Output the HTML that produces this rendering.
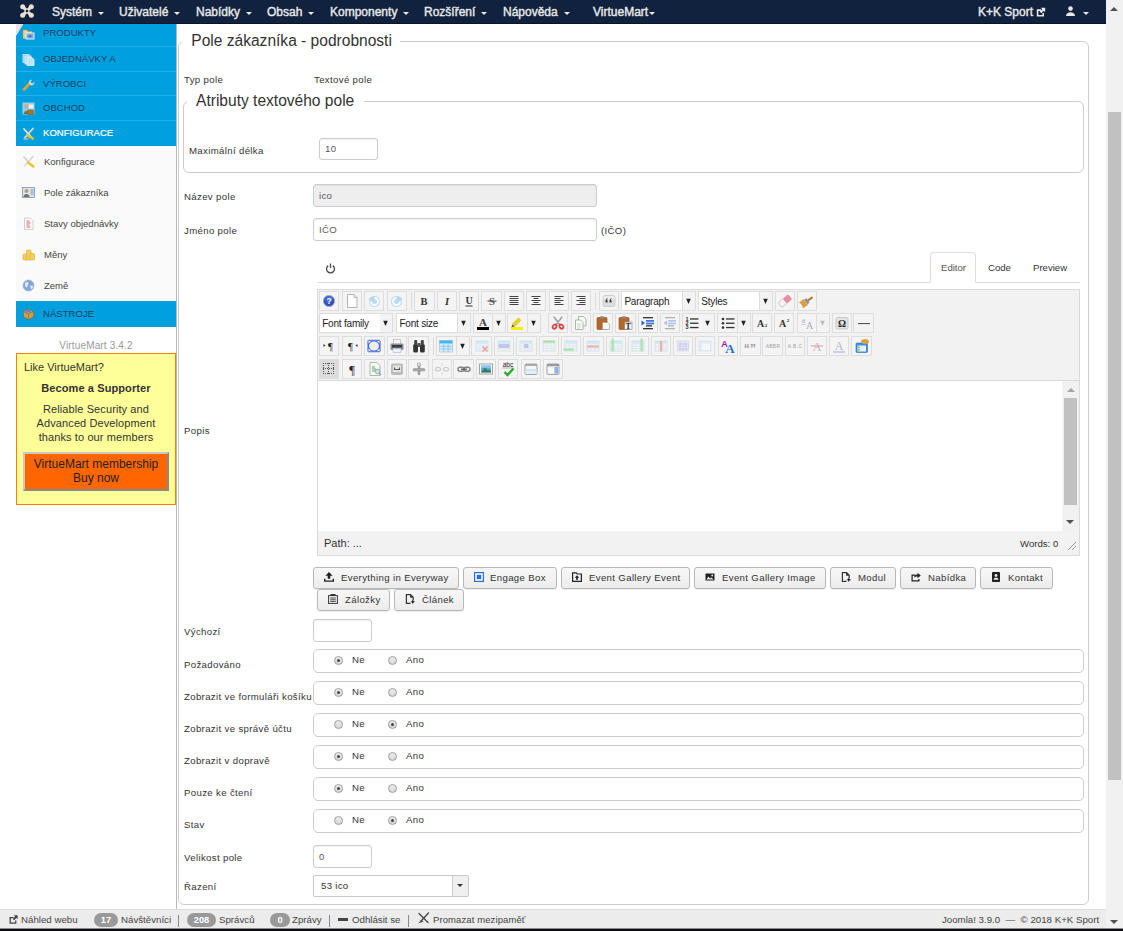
<!DOCTYPE html>
<html lang="cs">
<head>
<meta charset="utf-8">
<title>Pole zákazníka - podrobnosti</title>
<style>
*{box-sizing:border-box;margin:0;padding:0}
html,body{width:1123px;height:931px;overflow:hidden;background:#fff}
body{position:relative;font-family:"Liberation Sans",sans-serif;font-size:10px;color:#333}
.a{position:absolute;white-space:nowrap}
/* navbar */
#nav{left:0;top:0;width:1106px;height:24px;background:#10223e;border-bottom:1px solid #0a1428}
#nav span.m{position:absolute;top:5px;color:#e8e8e8;font-size:12px;line-height:15px;font-weight:normal;-webkit-text-stroke:.4px #e8e8e8}
.caret{display:inline-block;width:0;height:0;border-left:3.5px solid transparent;border-right:3.5px solid transparent;border-top:3.5px solid #e8e8e8;vertical-align:middle;margin-left:6px;margin-top:1px}
/* sidebar */
.sb{left:16px;width:160px;height:25px;background:#00a0df;border-bottom:1px solid #22b0ea;color:#1d3f5f;font-size:9.5px;line-height:24px;padding-left:27px;letter-spacing:.05px}
.sb.on{color:#fff;-webkit-text-stroke:.2px #fff}
.si{left:16px;width:160px;height:31px;background:#fafafa;color:#444;font-size:9.5px;line-height:31px;padding-left:28px}
.ic{position:absolute;left:6px;top:6px;width:13px;height:13px}
.si .ic{top:9px}
/* form */
.lb{font-size:9.6px;letter-spacing:.36px;color:#333;line-height:12px}
.inp{border:1px solid #ccc;border-radius:3px;background:#fff;font-size:9.6px;letter-spacing:.3px;color:#5a5a5a;line-height:20px;padding-left:5px;box-shadow:inset 0 1px 1px rgba(0,0,0,.06)}
.rb{left:313px;width:771px;height:24px;border:1px solid #ccc;border-radius:5px;background:#fff}
.rd{position:absolute;top:6px;width:9px;height:9px;border:1px solid #9c9c9c;border-radius:50%;background:linear-gradient(#eee,#d6d6d6)}
.rd.c::after{content:"";position:absolute;left:2px;top:2px;width:3px;height:3px;border-radius:50%;background:#444}
.rt{position:absolute;top:4px;font-size:9.6px;line-height:12px;letter-spacing:.36px;color:#333}
.btn{height:22px;border:1px solid #b8b8b8;border-radius:3px;background:linear-gradient(#f7f7f7,#ececec);font-size:9.6px;letter-spacing:.36px;color:#333;line-height:20px;box-shadow:0 1px 1px rgba(0,0,0,.08)}
.btn i{position:absolute;left:10px;top:4px;width:10px;height:10px;line-height:0}
.btn b{position:absolute;font-weight:normal;top:0}
/* editor toolbar */
.tb{width:20px;height:20px;border:1px solid #ddd;background:#f3f3f3}
.tb svg{position:absolute;left:1px;top:1px;width:16px;height:16px}
.sel{height:20px;background:#fff;border:1px solid #ddd;font-size:10px;line-height:18px;padding-top:1px;color:#222;padding-left:2px;letter-spacing:-.2px}
.ar{width:12px;height:20px;font-size:7px;line-height:18px;text-align:center;color:#222}
.sep{width:1px;height:18px;background:#dcdcdc}
.st{top:914px;font-size:9.7px;line-height:12px;color:#444}
.bdg{top:913px;height:14px;border-radius:7px;background:#999;color:#fff;font-size:9.3px;font-weight:bold;line-height:14px;text-align:center}
.lg{padding:0 8px 0 8px;background:#fff;font-size:16px;line-height:22px;color:#333;transform:scaleX(.972);transform-origin:0 0}
</style>
</head>
<body>

<!-- SIDEBAR -->
<div class="a sb" style="top:21px;height:26px"><svg class="ic" viewBox="0 0 13 13"><path d="M1 3h4l1 1.500h4v7h-9z" fill="#e8d28a" stroke="#b9a25a" stroke-width=".6"/><rect x="4" y="6" width="8" height="6" fill="#7ab0e8" stroke="#e8e8f0" stroke-width="1"/><rect x="6.500" y="8" width="3" height="2.500" fill="#4a7fc8"/></svg>PRODUKTY</div>
<div class="a sb" style="top:47px"><svg class="ic" viewBox="0 0 13 13"><rect x="1" y="1.500" width="6" height="8" fill="#8fd0ef" stroke="#d6eefa" stroke-width=".8"/><rect x="3" y="3" width="6" height="8" fill="#a5d9f2" stroke="#dff1fa" stroke-width=".8"/><path d="M5 4.500h5l2 2v6h-7z" fill="#bfe3f5" stroke="#e8f5fc" stroke-width=".8"/></svg>OBJEDNÁVKY A</div>
<div class="a sb" style="top:72px;height:24px"><svg class="ic" viewBox="0 0 13 13"><path d="M2 11.500l5.500-6" stroke="#e0a52c" stroke-width="2.600" stroke-linecap="round"/><path d="M7 5.500c-.8-2 .8-4.200 3.300-3.800l-1.800 1.900.6 1.500 1.700.3 1.500-1.700c.6 2.200-1.500 4-3.800 3.300z" fill="#d8dde2"/></svg>VÝROBCI</div>
<div class="a sb" style="top:96px"><svg class="ic" viewBox="0 0 13 13"><rect x="1" y="1" width="11" height="11" fill="#8ec6ea" stroke="#c8d8e0" stroke-width=".8"/><rect x="6.500" y="2.500" width="5" height="4" fill="#e8f2f8"/><circle cx="4.500" cy="4.500" r="2" fill="#d8a878"/><path d="M1.500 12c0-4 6-4 6 0z" fill="#5a7a5a"/><rect x="5.500" y="8" width="6" height="4.500" rx=".6" fill="#a8742a" stroke="#7a5218" stroke-width=".5"/></svg>OBCHOD</div>
<div class="a sb on" style="top:121px;border-bottom:0"><svg class="ic" viewBox="0 0 13 13"><path d="M2 2l8.500 9.500" stroke="#e8e8e8" stroke-width="1.800" stroke-linecap="round"/><path d="M11 1.500l-8 9" stroke="#dcdcdc" stroke-width="1.800" stroke-linecap="round"/><path d="M5.500 8.500l5.500 3" stroke="#f0c020" stroke-width="2.200" stroke-linecap="round"/><path d="M1.500 12h5" stroke="#bbb" stroke-width="1.400"/></svg>KONFIGURACE</div>
<div class="a si" style="top:146px"><svg class="ic" viewBox="0 0 13 13"><path d="M2 2l8.500 9.500" stroke="#d4d4d4" stroke-width="1.800" stroke-linecap="round"/><path d="M11 1.500l-8 9" stroke="#dadada" stroke-width="1.800" stroke-linecap="round"/><path d="M6 7.500l5.500 4" stroke="#f0c428" stroke-width="2.200" stroke-linecap="round"/></svg>Konfigurace</div>
<div class="a si" style="top:177px"><svg class="ic" viewBox="0 0 13 13"><rect x=".5" y="1.500" width="12" height="10" fill="#dbe6f2" stroke="#7a94b8" stroke-width=".8"/><circle cx="4.500" cy="5" r="2" fill="#c89868"/><path d="M1.500 11c0-4 6-4 6 0z" fill="#8a6a4a"/><path d="M8.500 4h3M8.500 6h3M8.500 8h3" stroke="#6a8ac8" stroke-width=".9"/></svg>Pole zákazníka</div>
<div class="a si" style="top:208px"><svg class="ic" viewBox="0 0 13 13"><path d="M2.500 1h6l2.500 2.500v9h-8.500z" fill="#fcfcfc" stroke="#c4c4c4" stroke-width=".8"/><path d="M4.500 4h3M4.500 6h4M4.500 8h3M4.500 10h4" stroke="#e05050" stroke-width=".9"/></svg>Stavy objednávky</div>
<div class="a si" style="top:239px"><svg class="ic" viewBox="0 0 13 13"><g fill="#f2cf62" stroke="#dba928" stroke-width=".6"><rect x="1" y="6" width="4.500" height="6" rx="1"/><rect x="4.500" y="2" width="4.500" height="10" rx="1"/><rect x="8" y="5.500" width="4.500" height="6.500" rx="1"/></g></svg>Měny</div>
<div class="a si" style="top:270px"><svg class="ic" viewBox="0 0 13 13"><circle cx="6.500" cy="6.500" r="5.500" fill="#7fa6d8" stroke="#a8b8c8" stroke-width=".8"/><path d="M3 4c1.500-1.500 3-1 3.500 0s-1 2-1 3.500-2 1-2.500-.5zM8 7c1-1 3-.5 3 .5s-1 3-2 2.500z" fill="#dfe8f0"/></svg>Země</div>
<div class="a sb" style="top:301px;border-bottom:0;height:26px;line-height:26px"><svg class="ic" viewBox="0 0 13 13"><path d="M1.500 4.500l5-2.500 5 2.500v5.500l-5 2.500-5-2.500z" fill="#c8a050" stroke="#8a6a2a" stroke-width=".6"/><path d="M1.500 4.500l5 2.500 5-2.500M6.500 7v5.500" stroke="#8a6a2a" stroke-width=".6" fill="none"/><rect x="4" y="3" width="5" height="2.500" fill="#5a8ad0"/></svg>NÁSTROJE</div>
<div class="a" style="left:16px;top:340px;width:160px;text-align:center;font-size:10px;line-height:12px;color:#999;letter-spacing:.15px">VirtueMart 3.4.2</div>

<div class="a" style="left:16px;top:23px;width:0;height:0;border-top:13px solid #e4e4e4;border-right:8px solid transparent"></div>
<!-- NAVBAR -->
<div class="a" id="nav">
<span class="m" style="left:52px">Systém<i class="caret"></i></span>
<span class="m" style="left:119px">Uživatelé<i class="caret"></i></span>
<span class="m" style="left:196px">Nabídky<i class="caret"></i></span>
<span class="m" style="left:267px">Obsah<i class="caret"></i></span>
<span class="m" style="left:330px">Komponenty<i class="caret"></i></span>
<span class="m" style="left:424px">Rozšíření<i class="caret"></i></span>
<span class="m" style="left:503px">Nápověda<i class="caret"></i></span>
<span class="m" style="left:593px">VirtueMart<i class="caret" style="margin-left:1px"></i></span>
<span class="m" style="left:978px">K+K Sport</span>
<svg class="a" style="left:20px;top:4px" width="14" height="14" viewBox="0 0 14 14"><g fill="none" stroke="#e9e1d4" stroke-width="3.200" stroke-linecap="round"><path d="M3.200 3.200l7.600 7.600M10.800 3.200l-7.600 7.600"/></g><g fill="#e9e1d4"><circle cx="2.700" cy="2.700" r="2.500"/><circle cx="11.300" cy="2.700" r="2.500"/><circle cx="2.700" cy="11.300" r="2.500"/><circle cx="11.300" cy="11.300" r="2.500"/></g><g fill="#10223e"><circle cx="7" cy="7" r="1.300"/><circle cx="7" cy="1" r="1.300"/><circle cx="7" cy="13" r="1.300"/><circle cx="1" cy="7" r="1.300"/><circle cx="13" cy="7" r="1.300"/></g></svg>
<span class="m" style="left:1066px"><svg width="9" height="10" viewBox="0 0 9 10" style="vertical-align:0"><circle cx="4.500" cy="2.600" r="2.300" fill="#e8e8e8"/><path d="M0 10c0-5 9-5 9 0z" fill="#e8e8e8"/></svg><i class="caret" style="margin-left:8px"></i></span>
<svg class="a" style="left:1036px;top:7px" width="10" height="10" viewBox="0 0 10 10"><path d="M.8 2.300h4.200v1.600h-2.600v4h4v-1.800h1.600v3.400h-7.200z" fill="#e8e8e8"/><path d="M4.800 .8h4.400v4.400l-1.400-1.400-2.500 2.500-1.600-1.600 2.500-2.500z" fill="#e8e8e8"/></svg>
</div>

<div class="a" style="left:176px;top:24px;width:1px;height:885px;background:#b8b8b8"></div>
<!-- MAIN -->
<div class="a" style="left:178px;top:41px;width:911px;height:864px;border:1px solid #ccc;border-radius:6px"></div>
<div class="a lg" style="left:182px;top:30px;padding-left:9.6px">Pole zákazníka - podrobnosti</div>

<div class="a lb" style="left:184px;top:74px">Typ pole</div>
<div class="a lb" style="left:314px;top:74px">Textové pole</div>

<div class="a" style="left:183px;top:101px;width:901px;height:72px;border:1px solid #ccc;border-radius:6px"></div>
<div class="a lg" style="left:187px;top:90px;padding-left:9.3px;padding-right:10px">Atributy textového pole</div>
<div class="a lb" style="left:189px;top:145px">Maximální délka</div>
<div class="a inp" style="left:319px;top:138px;width:59px;height:22px">10</div>

<div class="a lb" style="left:184px;top:191px">Název pole</div>
<div class="a inp" style="left:313px;top:184px;width:284px;height:23px;background:#eee;line-height:21px">ico</div>
<div class="a lb" style="left:184px;top:225px">Jméno pole</div>
<div class="a inp" style="left:313px;top:218px;width:284px;height:23px;line-height:21px">IČO</div>
<div class="a lb" style="left:601px;top:225px">(IČO)</div>

<div class="a lb" style="left:184px;top:425px">Popis</div>

<!-- YELLOW BOX -->
<div class="a" style="left:16px;top:353px;width:160px;height:152px;background:#ffff99;border:1px solid #ff7f00"></div>
<div class="a" style="left:24px;top:360px;font-size:11px;line-height:14px;color:#333">Like VirtueMart?</div>
<div class="a" style="left:16px;top:381px;width:160px;text-align:center;font-size:11px;letter-spacing:.1px;line-height:14px;color:#333;font-weight:bold">Become a Supporter</div>
<div class="a" style="left:16px;top:402px;width:160px;text-align:center;font-size:11px;letter-spacing:.1px;line-height:14px;color:#333;white-space:normal">Reliable Security and<br>Advanced Development<br>thanks to our members</div>
<div class="a" style="left:23px;top:452px;width:146px;height:39px;background:#ff6600;border:2px solid;border-color:#d0c8c0 #8a8a8a #8a8a8a #d0c8c0;text-align:center;font-size:12px;line-height:14px;color:#222;padding-top:3px">VirtueMart membership<br>Buy now</div>

<!-- EDITOR TABS -->
<div class="a" style="left:317px;top:282px;width:763px;height:1px;background:#ddd"></div>
<div class="a" style="left:930px;top:252px;width:46px;height:31px;border:1px solid #ddd;border-bottom:1px solid #fff;border-radius:4px 4px 0 0;background:#fff"></div>
<div class="a lb" style="left:941px;top:262px;letter-spacing:0;color:#555">Editor</div>
<div class="a lb" style="left:988px;top:262px;letter-spacing:0;color:#333">Code</div>
<div class="a lb" style="left:1033px;top:262px;letter-spacing:0;color:#333">Preview</div>
<svg class="a" style="left:325px;top:263px" width="11" height="11" viewBox="0 0 11 11"><path d="M3.2 2.6A4 4 0 1 0 7.8 2.6" fill="none" stroke="#484848" stroke-width="1.3"/><path d="M5.5 0.5V5" stroke="#484848" stroke-width="1.3"/></svg>

<!-- EDITOR FRAME -->
<div class="a" style="left:317px;top:289px;width:763px;height:267px;border:1px solid #dadada;background:#f2f2f2"></div>
<div class="a" style="left:318px;top:380px;width:761px;height:151px;background:#fff;border-top:1px solid #d9d9d9"></div>
<!-- inner scrollbar -->
<div class="a" style="left:1062px;top:381px;width:17px;height:150px;background:#f1f1f1"></div>
<div class="a" style="left:1064px;top:398px;width:13px;height:107px;background:#c1c1c1"></div>
<div class="a" style="left:1067px;top:388px;width:0;height:0;border-left:4px solid transparent;border-right:4px solid transparent;border-bottom:4px solid #a3a3a3"></div>
<div class="a" style="left:1066px;top:520px;width:0;height:0;border-left:4px solid transparent;border-right:4px solid transparent;border-top:4px solid #505050"></div>
<div class="a" style="left:324px;top:537px;font-size:11px;line-height:13px;color:#333">Path: ...</div>
<div class="a" style="left:1020px;top:538px;font-size:9.6px;line-height:12px;color:#333">Words: 0</div>
<svg class="a" style="left:1067px;top:541px" width="10" height="10" viewBox="0 0 10 10"><path d="M9 1L1 9M9 5L5 9" stroke="#999" stroke-width="1" fill="none"/></svg>

<!-- TOOLBAR -->
<div id="tbar">
<div class="a tb" style="left:319.2px;top:291.4px;width:20.3px;background:#f4f4f4"><svg viewBox="0 0 16 16" style="left:1.2px"><circle cx="8" cy="8" r="5.600" fill="#2a4fc4" stroke="#aab" stroke-width="1"/><circle cx="8" cy="6.500" r="3.500" fill="#5b7fe6" opacity=".55"/><text x="8" y="11" font-family="Liberation Sans,serif" font-size="8.5" font-weight="bold" font-style="normal" fill="#fff" text-anchor="middle" >?</text></svg></div>
<div class="a tb" style="left:341.5px;top:291.4px;width:20.3px;background:#f4f4f4"><svg viewBox="0 0 16 16" style="left:1.2px"><path d="M3.5 1.5h6.5l3 3v10h-9.5z" fill="#fdfdfd" stroke="#aaa" stroke-width=".9"/><path d="M10 1.5v3h3" fill="#e8e8e8" stroke="#aaa" stroke-width=".8"/></svg></div>
<div class="a tb" style="left:364.2px;top:291.4px;width:20.3px;background:#f4f4f4"><svg viewBox="0 0 16 16" style="left:1.2px"><g opacity=".9"><circle cx="8.5" cy="8.5" r="5.5" fill="#b4daf3"/><path d="M5 8.5a3.5 3.5 0 1 0 3.5-3.5" fill="none" stroke="#fff" stroke-width="2"/><path d="M2.5 5.5l5-2.5v5z" fill="#a9d1ee"/></g></svg></div>
<div class="a tb" style="left:386.5px;top:291.4px;width:20.3px;background:#f4f4f4"><svg viewBox="0 0 16 16" style="left:1.2px"><g opacity=".9"><circle cx="7.5" cy="8.5" r="5.5" fill="#b4daf3"/><path d="M11 8.5a3.5 3.5 0 1 1-3.5-3.5" fill="none" stroke="#fff" stroke-width="2"/><path d="M13.5 5.5l-5-2.5v5z" fill="#a9d1ee"/></g></svg></div>
<div class="a sep" style="left:410.5px;top:292.4px"></div>
<div class="a tb" style="left:414.3px;top:291.4px;width:20.3px;background:#f4f4f4"><svg viewBox="0 0 16 16" style="left:1.2px"><text x="8" y="11.7" font-family="Liberation Serif,serif" font-size="10.5" font-weight="bold" font-style="normal" fill="#333" text-anchor="middle" >B</text></svg></div>
<div class="a tb" style="left:436.7px;top:291.4px;width:20.3px;background:#f4f4f4"><svg viewBox="0 0 16 16" style="left:1.2px"><text x="8" y="11.7" font-family="Liberation Serif,serif" font-size="10.5" font-weight="bold" font-style="italic" fill="#333" text-anchor="middle" >I</text></svg></div>
<div class="a tb" style="left:459.1px;top:291.4px;width:20.3px;background:#f4f4f4"><svg viewBox="0 0 16 16" style="left:1.2px"><text x="8" y="11" font-family="Liberation Serif,serif" font-size="10" font-weight="bold" font-style="normal" fill="#333" text-anchor="middle" >U</text><rect x="4.5" y="12.5" width="7" height="1" fill="#333"/></svg></div>
<div class="a tb" style="left:481.4px;top:291.4px;width:20.3px;background:#f4f4f4"><svg viewBox="0 0 16 16" style="left:1.2px"><text x="8" y="11.7" font-family="Liberation Serif,serif" font-size="10.5" font-weight="bold" font-style="normal" fill="#555" text-anchor="middle" >S</text><rect x="3.5" y="7.6" width="9" height="1" fill="#444"/></svg></div>
<div class="a tb" style="left:503.7px;top:291.4px;width:20.3px;background:#f4f4f4"><svg viewBox="0 0 16 16" style="left:1.2px"><rect x="3.5" y="3.0" width="9.0" height="1" fill="#444"/><rect x="3.5" y="5.0" width="9.0" height="1" fill="#444"/><rect x="3.5" y="7.0" width="9.0" height="1" fill="#444"/><rect x="3.5" y="9.0" width="9.0" height="1" fill="#444"/><rect x="3.5" y="11.0" width="9.0" height="1" fill="#444"/></svg></div>
<div class="a tb" style="left:526.2px;top:291.4px;width:20.3px;background:#f4f4f4"><svg viewBox="0 0 16 16" style="left:1.2px"><rect x="3.5" y="3.0" width="9.0" height="1" fill="#444"/><rect x="5.5" y="5.0" width="5.0" height="1" fill="#444"/><rect x="3.5" y="7.0" width="9.0" height="1" fill="#444"/><rect x="5.5" y="9.0" width="5.0" height="1" fill="#444"/><rect x="3.5" y="11.0" width="9.0" height="1" fill="#444"/></svg></div>
<div class="a tb" style="left:548.6px;top:291.4px;width:20.3px;background:#f4f4f4"><svg viewBox="0 0 16 16" style="left:1.2px"><rect x="3.5" y="3.0" width="9.0" height="1" fill="#444"/><rect x="3.5" y="5.0" width="6.0" height="1" fill="#444"/><rect x="3.5" y="7.0" width="9.0" height="1" fill="#444"/><rect x="3.5" y="9.0" width="6.0" height="1" fill="#444"/><rect x="3.5" y="11.0" width="9.0" height="1" fill="#444"/></svg></div>
<div class="a tb" style="left:570.7px;top:291.4px;width:20.3px;background:#f4f4f4"><svg viewBox="0 0 16 16" style="left:1.2px"><rect x="3.5" y="3.0" width="9.0" height="1" fill="#444"/><rect x="6.5" y="5.0" width="6.0" height="1" fill="#444"/><rect x="3.5" y="7.0" width="9.0" height="1" fill="#444"/><rect x="6.5" y="9.0" width="6.0" height="1" fill="#444"/><rect x="3.5" y="11.0" width="9.0" height="1" fill="#444"/></svg></div>
<div class="a sep" style="left:594.5px;top:292.4px"></div>
<div class="a tb" style="left:598.5px;top:291.4px;width:20.3px;background:#f4f4f4"><svg viewBox="0 0 16 16" style="left:1.2px"><rect x="2" y="2.500" width="12" height="11" rx="2" fill="#dedede" stroke="#c6c6c6" stroke-width=".8"/><rect x="2.500" y="3" width="11" height="4" rx="1.500" fill="#ececec"/><path d="M4.600 9.500v-2.200c0-1.200.8-2 2-2.100v.9c-.6.100-.9.500-.9 1.100h.9v2.300zM8.600 9.500v-2.200c0-1.200.8-2 2-2.100v.9c-.6.100-.9.500-.9 1.100h.9v2.300z" fill="#3a3a3a"/></svg></div>
<div class="a sel" style="left:621.4px;top:291.4px;width:61.5px">Paragraph</div>
<div class="a tb" style="left:682.6px;top:291.4px;width:13px;border-left:0"><svg viewBox="0 0 8 8" style="left:2.0px;top:5.5px;width:7px;height:7px"><path d="M1.400 .8h5.200l-2.600 6z" fill="#222"/></svg></div>
<div class="a sel" style="left:698.3px;top:291.4px;width:61.5px">Styles</div>
<div class="a tb" style="left:759.6px;top:291.4px;width:13px;border-left:0"><svg viewBox="0 0 8 8" style="left:2.0px;top:5.5px;width:7px;height:7px"><path d="M1.400 .8h5.200l-2.600 6z" fill="#222"/></svg></div>
<div class="a tb" style="left:774.6px;top:291.4px;width:20.3px;background:#f4f4f4"><svg viewBox="0 0 16 16" style="left:1.2px"><g transform="rotate(-40 8 8)"><rect x="1.5" y="5" width="7" height="6" rx="1.2" fill="#f4f4f4" stroke="#bbb" stroke-width=".7"/><rect x="8" y="5" width="6.5" height="6" rx="1.2" fill="#f08aa4" stroke="#d88" stroke-width=".5"/></g></svg></div>
<div class="a tb" style="left:797.2px;top:291.4px;width:20.3px;background:#f4f4f4"><svg viewBox="0 0 16 16" style="left:1.2px"><g transform="rotate(-35 8 8)"><rect x="8.5" y="7" width="6.5" height="2.2" rx="1" fill="#c07a2a"/><rect x="6.5" y="5.3" width="2.6" height="5.6" fill="#8a8f9a"/><path d="M0.5 4.5h6v7.2h-6c1-1.5 1-5.5 0-7.2z" fill="#d9a143"/></g></svg></div>
<div class="a sel" style="left:319.2px;top:313.4px;width:61.5px">Font family</div>
<div class="a tb" style="left:380.4px;top:313.4px;width:13px;border-left:0"><svg viewBox="0 0 8 8" style="left:2.0px;top:5.5px;width:7px;height:7px"><path d="M1.400 .8h5.200l-2.600 6z" fill="#222"/></svg></div>
<div class="a sel" style="left:396.4px;top:313.4px;width:61.5px">Font size</div>
<div class="a tb" style="left:457.6px;top:313.4px;width:13px;border-left:0"><svg viewBox="0 0 8 8" style="left:2.0px;top:5.5px;width:7px;height:7px"><path d="M1.400 .8h5.200l-2.600 6z" fill="#222"/></svg></div>
<div class="a tb" style="left:472.8px;top:313.4px;width:20.3px;background:#f4f4f4"><svg viewBox="0 0 16 16" style="left:1.2px"><text x="8" y="10.5" font-family="Liberation Serif,serif" font-size="11" font-weight="bold" font-style="normal" fill="#444" text-anchor="middle" >A</text><rect x="2" y="12" width="12" height="3" fill="#000"/></svg></div>
<div class="a tb" style="left:492.8px;top:313.4px;width:13px;border-left:0"><svg viewBox="0 0 8 8" style="left:2.0px;top:5.5px;width:7px;height:7px"><path d="M1.400 .8h5.200l-2.600 6z" fill="#222"/></svg></div>
<div class="a tb" style="left:507.3px;top:313.4px;width:20.3px;background:#f4f4f4"><svg viewBox="0 0 16 16" style="left:1.2px"><rect x="2" y="12" width="12" height="3" fill="#ffee00"/><g transform="rotate(-45 8 7)"><rect x="3" y="5.2" width="9" height="3.4" rx=".6" fill="#e9d21a" stroke="#b9a400" stroke-width=".4"/><path d="M3 5.4l-3 1.5 3 1.5z" fill="#666"/></g></svg></div>
<div class="a tb" style="left:527.6px;top:313.4px;width:13px;border-left:0"><svg viewBox="0 0 8 8" style="left:2.0px;top:5.5px;width:7px;height:7px"><path d="M1.400 .8h5.200l-2.600 6z" fill="#222"/></svg></div>
<div class="a tb" style="left:548.0px;top:313.4px;width:20.3px;background:#f4f4f4"><svg viewBox="0 0 16 16" style="left:1.2px"><path d="M4.200 2.200l5.800 7.600M11.800 2.200l-5.800 7.600" stroke="#a4a4a4" stroke-width="1.700" stroke-linecap="round"/><ellipse cx="4.600" cy="11.600" rx="1.700" ry="2.300" transform="rotate(38 4.600 11.600)" fill="none" stroke="#e23b40" stroke-width="1.700"/><ellipse cx="11.400" cy="11.600" rx="1.700" ry="2.300" transform="rotate(-38 11.400 11.600)" fill="none" stroke="#e23b40" stroke-width="1.700"/></svg></div>
<div class="a tb" style="left:570.6px;top:313.4px;width:20.3px;background:#f4f4f4"><svg viewBox="0 0 16 16" style="left:1.2px"><path d="M5.5 1.5h5l2.5 2.5v7h-7.5z" fill="#f4f7f4" stroke="#9aa79a" stroke-width=".8"/><path d="M2.5 5h5l2.500 2.500v7h-7.500z" fill="#f8faf8" stroke="#9aa79a" stroke-width=".8"/><path d="M4 9h4M4 11h4M4 13h3" stroke="#b5c4b5" stroke-width=".7"/></svg></div>
<div class="a tb" style="left:592.8px;top:313.4px;width:20.3px;background:#f4f4f4"><svg viewBox="0 0 16 16" style="left:1.2px"><rect x="2" y="2.5" width="10" height="12" rx="1" fill="#b5672a" stroke="#8a4a1a" stroke-width=".6"/><rect x="5" y="1.2" width="4" height="2.6" rx=".8" fill="#888"/><path d="M7.500 7.500h5l2 2v5h-7z" fill="#f6f6f6" stroke="#999" stroke-width=".6"/></svg></div>
<div class="a tb" style="left:615.3px;top:313.4px;width:20.3px;background:#f4f4f4"><svg viewBox="0 0 16 16" style="left:1.2px"><rect x="2" y="2.500" width="10" height="12" rx="1" fill="#b5672a" stroke="#8a4a1a" stroke-width=".6"/><rect x="5" y="1.2" width="4" height="2.600" rx=".8" fill="#888"/><rect x="7.500" y="7" width="7.500" height="7.500" fill="#f6f6f6" stroke="#777" stroke-width=".6"/><text x="11.2" y="13.6" font-family="Liberation Serif,serif" font-size="8" font-weight="bold" font-style="normal" fill="#222" text-anchor="middle" >T</text></svg></div>
<div class="a tb" style="left:637.7px;top:313.4px;width:20.3px;background:#f4f4f4"><svg viewBox="0 0 16 16" style="left:1.2px"><rect x="3" y="2" width="10" height="1.3" fill="#333"/><rect x="3" y="13" width="10" height="1.3" fill="#333"/><rect x="6" y="5" width="8" height="1.8" fill="#3d7be0"/><rect x="6" y="7.600" width="8" height="1.8" fill="#3d7be0"/><rect x="6" y="10.200" width="6" height="1.3" fill="#333"/><path d="M1.500 5.500l3.500 2.500-3.500 2.500z" fill="#2a63d0"/></svg></div>
<div class="a tb" style="left:659.9px;top:313.4px;width:20.3px;background:#f4f4f4"><svg viewBox="0 0 16 16" style="left:1.2px"><g opacity=".35"><rect x="3" y="2" width="10" height="1.3" fill="#333"/><rect x="3" y="13" width="10" height="1.3" fill="#333"/><rect x="6" y="5" width="8" height="1.8" fill="#3d7be0"/><rect x="6" y="7.600" width="8" height="1.8" fill="#3d7be0"/><rect x="6" y="10.200" width="6" height="1.300" fill="#333"/><path d="M5 5.500l-3.500 2.500 3.500 2.500z" fill="#2a63d0"/></g></svg></div>
<div class="a tb" style="left:682.3px;top:313.4px;width:20.3px;background:#f4f4f4"><svg viewBox="0 0 16 16" style="left:1.2px"><rect x="6" y="3.300" width="8.500" height="1.300" fill="#333"/><rect x="6" y="7.600" width="8.500" height="1.300" fill="#333"/><rect x="6" y="11.900" width="8.500" height="1.300" fill="#333"/><text x="3" y="5.8" font-family="Liberation Sans,serif" font-size="5.5" font-weight="bold" font-style="normal" fill="#333" text-anchor="middle" >1</text><text x="3" y="10.1" font-family="Liberation Sans,serif" font-size="5.5" font-weight="bold" font-style="normal" fill="#333" text-anchor="middle" >2</text><text x="3" y="14.4" font-family="Liberation Sans,serif" font-size="5.5" font-weight="bold" font-style="normal" fill="#333" text-anchor="middle" >3</text></svg></div>
<div class="a tb" style="left:702.3px;top:313.4px;width:13px;border-left:0"><svg viewBox="0 0 8 8" style="left:2.0px;top:5.5px;width:7px;height:7px"><path d="M1.400 .8h5.200l-2.600 6z" fill="#222"/></svg></div>
<div class="a tb" style="left:717.4px;top:313.4px;width:20.3px;background:#f4f4f4"><svg viewBox="0 0 16 16" style="left:1.2px"><rect x="6" y="3.300" width="8.500" height="1.300" fill="#333"/><rect x="6" y="7.600" width="8.500" height="1.300" fill="#333"/><rect x="6" y="11.900" width="8.500" height="1.300" fill="#333"/><circle cx="3" cy="4" r="1.300" fill="#333"/><circle cx="3" cy="8.300" r="1.300" fill="#333"/><circle cx="3" cy="12.600" r="1.300" fill="#333"/></svg></div>
<div class="a tb" style="left:737.6px;top:313.4px;width:13px;border-left:0"><svg viewBox="0 0 8 8" style="left:2.0px;top:5.5px;width:7px;height:7px"><path d="M1.400 .8h5.200l-2.600 6z" fill="#222"/></svg></div>
<div class="a tb" style="left:751.5px;top:313.4px;width:20.3px;background:#f4f4f4"><svg viewBox="0 0 16 16" style="left:1.2px"><text x="6.5" y="11.5" font-family="Liberation Serif,serif" font-size="10" font-weight="bold" font-style="normal" fill="#333" text-anchor="middle" >A</text><text x="12" y="12" font-family="Liberation Serif,serif" font-size="5" font-weight="bold" font-style="normal" fill="#333" text-anchor="middle" >2</text></svg></div>
<div class="a tb" style="left:774.2px;top:313.4px;width:20.3px;background:#f4f4f4"><svg viewBox="0 0 16 16" style="left:1.2px"><text x="6.5" y="11.5" font-family="Liberation Serif,serif" font-size="10" font-weight="bold" font-style="normal" fill="#333" text-anchor="middle" >A</text><text x="12" y="7" font-family="Liberation Serif,serif" font-size="5" font-weight="bold" font-style="normal" fill="#333" text-anchor="middle" >2</text></svg></div>
<div class="a tb" style="left:796.6px;top:313.4px;width:20.3px;background:#f4f4f4"><svg viewBox="0 0 16 16" style="left:1.2px"><g opacity=".5"><text x="4.5" y="8" font-family="Liberation Serif,serif" font-size="8" font-weight="normal" font-style="normal" fill="#667" text-anchor="middle" >a</text><text x="10.5" y="14" font-family="Liberation Serif,serif" font-size="10" font-weight="normal" font-style="normal" fill="#667" text-anchor="middle" >A</text><rect x="2" y="9" width="5" height=".8" fill="#7ae"/></g></svg></div>
<div class="a tb" style="left:816.6px;top:313.4px;width:13px;border-left:0"><svg viewBox="0 0 8 8" style="left:2.0px;top:5.5px;width:7px;height:7px"><path d="M1.400 .8h5.200l-2.600 6z" fill="#bbb"/></svg></div>
<div class="a tb" style="left:831.5px;top:313.4px;width:20.3px;background:#f4f4f4"><svg viewBox="0 0 16 16" style="left:1.2px"><rect x="2" y="2.500" width="12" height="11.500" rx="1.500" fill="#e4e4e4" stroke="#bdbdbd" stroke-width=".8"/><text x="8" y="12" font-family="Liberation Serif,serif" font-size="10" font-weight="bold" font-style="normal" fill="#222" text-anchor="middle" >Ω</text></svg></div>
<div class="a tb" style="left:853.4px;top:313.4px;width:20.3px;background:#f4f4f4"><svg viewBox="0 0 16 16" style="left:1.2px"><rect x="2" y="8" width="12" height="1.100" fill="#555"/></svg></div>
<div class="a tb" style="left:319.2px;top:336.2px;width:20.3px;background:#f4f4f4"><svg viewBox="0 0 16 16" style="left:1.2px"><text x="9.5" y="11.5" font-family="Liberation Serif,serif" font-size="10.5" font-weight="normal" font-style="normal" fill="#222" text-anchor="middle" >¶</text><path d="M2.500 6l2 1.500-2 1.500z" fill="#333"/></svg></div>
<div class="a tb" style="left:341.5px;top:336.2px;width:20.3px;background:#f4f4f4"><svg viewBox="0 0 16 16" style="left:1.2px"><text x="6.5" y="11.5" font-family="Liberation Serif,serif" font-size="10.5" font-weight="normal" font-style="normal" fill="#222" text-anchor="middle" >¶</text><path d="M13.500 6l-2 1.500 2 1.500z" fill="#333"/></svg></div>
<div class="a tb" style="left:364.3px;top:336.2px;width:20.3px;background:#f4f4f4"><svg viewBox="0 0 16 16" style="left:1.2px"><rect x="1.500" y="2" width="13" height="12" rx="1.500" fill="#4a6be0" stroke="#8aa2ee" stroke-width=".8"/><ellipse cx="8" cy="8" rx="5" ry="4.600" fill="#eeeeee"/><path d="M2.500 3v2.500l2.500-2.500zM13.500 3v2.500l-2.500-2.500zM2.500 13v-2.500l2.500 2.500zM13.500 13v-2.500l-2.500 2.500z" fill="#fff"/></svg></div>
<div class="a tb" style="left:386.5px;top:336.2px;width:20.3px;background:#f4f4f4"><svg viewBox="0 0 16 16" style="left:1.2px"><rect x="4.500" y="1.500" width="7" height="5" fill="#f6f6f6" stroke="#aaa" stroke-width=".6"/><rect x="1.500" y="5.500" width="13" height="6.500" rx="1.200" fill="#8a8f96"/><rect x="3" y="7" width="10" height="2.500" fill="#3a3d42"/><rect x="4" y="10.500" width="8" height="4" fill="#eaf3fb" stroke="#9ab" stroke-width=".5"/></svg></div>
<div class="a tb" style="left:408.4px;top:336.2px;width:20.3px;background:#f4f4f4"><svg viewBox="0 0 16 16" style="left:1.2px"><rect x="2.200" y="6" width="4.800" height="8.500" rx="1.500" fill="#333"/><rect x="9" y="6" width="4.800" height="8.500" rx="1.500" fill="#333"/><rect x="3.200" y="2" width="3" height="5" rx="1" fill="#444"/><rect x="9.800" y="2" width="3" height="5" rx="1" fill="#444"/><rect x="6.500" y="5" width="3" height="4" fill="#555"/></svg></div>
<div class="a sep" style="left:432.7px;top:337.2px"></div>
<div class="a tb" style="left:436.3px;top:336.2px;width:20.3px;background:#f4f4f4"><svg viewBox="0 0 16 16" style="left:1.2px"><rect x="1.500" y="2.500" width="13" height="11.500" fill="#dfeefa" stroke="#b8c8d8" stroke-width=".8"/><rect x="1.500" y="2.500" width="13" height="3" fill="#49b4f2"/><path d="M1.500 8.200h13M1.500 11h13M5.800 5.500v8.500M10.100 5.500v8.500" stroke="#7fc4ef" stroke-width=".9"/></svg></div>
<div class="a tb" style="left:456.5px;top:336.2px;width:13px;border-left:0"><svg viewBox="0 0 8 8" style="left:2.0px;top:5.5px;width:7px;height:7px"><path d="M1.400 .8h5.200l-2.600 6z" fill="#222"/></svg></div>
<div class="a tb" style="left:471.4px;top:336.2px;width:20.3px;background:#f4f4f4"><svg viewBox="0 0 16 16" style="left:1.2px"><g opacity="0.45"><rect x="2" y="3" width="12" height="10" fill="#e8f4fb" stroke="#9cc" stroke-width=".8"/><rect x="2" y="3" width="12" height="2.5" fill="#9fd8f5"/><path d="M2 8h12M2 10.5h12M6 5.5v7.5M10 5.5v7.5" stroke="#bcd" stroke-width=".6"/><path d="M8.500 8.500l5 5M13.500 8.500l-5 5" stroke="#e33" stroke-width="1.500"/></g></svg></div>
<div class="a tb" style="left:493.6px;top:336.2px;width:20.3px;background:#f4f4f4"><svg viewBox="0 0 16 16" style="left:1.2px"><g opacity="0.45"><rect x="2" y="3" width="12" height="10" fill="#e8f4fb" stroke="#9cc" stroke-width=".8"/><rect x="2" y="3" width="12" height="2.5" fill="#9fd8f5"/><path d="M2 8h12M2 10.5h12M6 5.5v7.5M10 5.5v7.5" stroke="#bcd" stroke-width=".6"/><rect x="3" y="6.500" width="10" height="3" fill="#88e" stroke="#66c" stroke-width=".5"/></g></svg></div>
<div class="a tb" style="left:516.3px;top:336.2px;width:20.3px;background:#f4f4f4"><svg viewBox="0 0 16 16" style="left:1.2px"><g opacity="0.45"><rect x="2" y="3" width="12" height="10" fill="#e8f4fb" stroke="#9cc" stroke-width=".8"/><rect x="2" y="3" width="12" height="2.5" fill="#9fd8f5"/><path d="M2 8h12M2 10.5h12M6 5.5v7.5M10 5.5v7.5" stroke="#bcd" stroke-width=".6"/><rect x="6.500" y="6.500" width="3.500" height="3" fill="#88e" stroke="#66c" stroke-width=".5"/></g></svg></div>
<div class="a tb" style="left:538.6px;top:336.2px;width:20.3px;background:#f4f4f4"><svg viewBox="0 0 16 16" style="left:1.2px"><g opacity="0.45"><rect x="2" y="3" width="12" height="10" fill="#e8f4fb" stroke="#9cc" stroke-width=".8"/><rect x="2" y="3" width="12" height="2.5" fill="#9fd8f5"/><path d="M2 8h12M2 10.5h12M6 5.5v7.5M10 5.5v7.5" stroke="#bcd" stroke-width=".6"/><rect x="2" y="2.500" width="12" height="2.200" fill="#5c5"/></g></svg></div>
<div class="a tb" style="left:561.0px;top:336.2px;width:20.3px;background:#f4f4f4"><svg viewBox="0 0 16 16" style="left:1.2px"><g opacity="0.45"><rect x="2" y="3" width="12" height="10" fill="#e8f4fb" stroke="#9cc" stroke-width=".8"/><rect x="2" y="3" width="12" height="2.5" fill="#9fd8f5"/><path d="M2 8h12M2 10.5h12M6 5.5v7.5M10 5.5v7.5" stroke="#bcd" stroke-width=".6"/><rect x="0.500" y="10.500" width="10" height="2.200" fill="#5c5"/></g></svg></div>
<div class="a tb" style="left:583.3px;top:336.2px;width:20.3px;background:#f4f4f4"><svg viewBox="0 0 16 16" style="left:1.2px"><g opacity="0.45"><rect x="2" y="3" width="12" height="10" fill="#e8f4fb" stroke="#9cc" stroke-width=".8"/><rect x="2" y="3" width="12" height="2.5" fill="#9fd8f5"/><path d="M2 8h12M2 10.5h12M6 5.5v7.5M10 5.5v7.5" stroke="#bcd" stroke-width=".6"/><rect x="2" y="7.500" width="12" height="2" fill="#e55"/></g></svg></div>
<div class="a tb" style="left:605.5px;top:336.2px;width:20.3px;background:#f4f4f4"><svg viewBox="0 0 16 16" style="left:1.2px"><g opacity="0.45"><rect x="2" y="3" width="12" height="10" fill="#e8f4fb" stroke="#9cc" stroke-width=".8"/><rect x="2" y="3" width="12" height="2.5" fill="#9fd8f5"/><path d="M2 8h12M2 10.5h12M6 5.5v7.5M10 5.5v7.5" stroke="#bcd" stroke-width=".6"/><rect x="3.500" y="0.500" width="2.200" height="13" fill="#5c5"/></g></svg></div>
<div class="a tb" style="left:628.3px;top:336.2px;width:20.3px;background:#f4f4f4"><svg viewBox="0 0 16 16" style="left:1.2px"><g opacity="0.45"><rect x="2" y="3" width="12" height="10" fill="#e8f4fb" stroke="#9cc" stroke-width=".8"/><rect x="2" y="3" width="12" height="2.5" fill="#9fd8f5"/><path d="M2 8h12M2 10.5h12M6 5.5v7.5M10 5.5v7.5" stroke="#bcd" stroke-width=".6"/><rect x="10.500" y="0.500" width="2.200" height="13" fill="#5c5"/></g></svg></div>
<div class="a tb" style="left:650.5px;top:336.2px;width:20.3px;background:#f4f4f4"><svg viewBox="0 0 16 16" style="left:1.2px"><g opacity="0.45"><rect x="2" y="3" width="12" height="10" fill="#e8f4fb" stroke="#9cc" stroke-width=".8"/><rect x="2" y="3" width="12" height="2.5" fill="#9fd8f5"/><path d="M2 8h12M2 10.5h12M6 5.5v7.5M10 5.5v7.5" stroke="#bcd" stroke-width=".6"/><rect x="7" y="3" width="2.200" height="10.500" fill="#e55"/></g></svg></div>
<div class="a tb" style="left:672.6px;top:336.2px;width:20.3px;background:#f4f4f4"><svg viewBox="0 0 16 16" style="left:1.2px"><g opacity=".5"><rect x="2.500" y="3" width="11" height="10" fill="#dde" stroke="#aac" stroke-width=".6"/><rect x="4" y="5" width="8" height="7" fill="#99e"/><path d="M4 7.300h8M4 9.600h8M6.700 5v7M9.300 5v7" stroke="#eef" stroke-width=".7"/></g></svg></div>
<div class="a tb" style="left:695.1px;top:336.2px;width:20.3px;background:#f4f4f4"><svg viewBox="0 0 16 16" style="left:1.2px"><g opacity=".5"><rect x="2" y="3" width="12" height="10" fill="#cfe8f8" stroke="#acd" stroke-width=".6"/><rect x="5" y="5.500" width="8" height="6.500" fill="#fafafa"/></g></svg></div>
<div class="a tb" style="left:717.5px;top:336.2px;width:20.3px;background:#f4f4f4"><svg viewBox="0 0 16 16" style="left:1.2px"><text x="4.5" y="8.5" font-family="Liberation Sans,serif" font-size="9" font-weight="bold" font-style="normal" fill="#9a1fa0" text-anchor="middle" >A</text><text x="10" y="14.5" font-family="Liberation Serif,serif" font-size="13" font-weight="bold" font-style="normal" fill="#1d6fd0" text-anchor="middle" >A</text></svg></div>
<div class="a tb" style="left:740.3px;top:336.2px;width:20.3px;background:#f4f4f4"><svg viewBox="0 0 16 16" style="left:1.2px"><g opacity=".55"><text x="8" y="15" font-family="Liberation Sans,serif" font-size="12" font-weight="bold" font-style="normal" fill="#555" text-anchor="middle" letter-spacing=".3">“”</text></g></svg></div>
<div class="a tb" style="left:762.4px;top:336.2px;width:20.3px;background:#f4f4f4"><svg viewBox="0 0 16 16" style="left:1.2px"><g opacity=".5"><text x="8" y="10" font-family="Liberation Sans,serif" font-size="4.8" font-weight="normal" font-style="normal" fill="#444" text-anchor="middle" letter-spacing=".4">ABBR</text></g></svg></div>
<div class="a tb" style="left:784.5px;top:336.2px;width:20.3px;background:#f4f4f4"><svg viewBox="0 0 16 16" style="left:1.2px"><g opacity=".5"><text x="8" y="10" font-family="Liberation Sans,serif" font-size="4.8" font-weight="normal" font-style="normal" fill="#444" text-anchor="middle" letter-spacing=".4">A.B.C</text></g></svg></div>
<div class="a tb" style="left:806.8px;top:336.2px;width:20.3px;background:#f4f4f4"><svg viewBox="0 0 16 16" style="left:1.2px"><g opacity=".5"><text x="8" y="12.5" font-family="Liberation Serif,serif" font-size="12" font-weight="normal" font-style="normal" fill="#777" text-anchor="middle" >A</text><rect x="2" y="7.500" width="12" height="1" fill="#e33"/></g></svg></div>
<div class="a tb" style="left:829.2px;top:336.2px;width:20.3px;background:#f4f4f4"><svg viewBox="0 0 16 16" style="left:1.2px"><g opacity=".5"><text x="8" y="12" font-family="Liberation Serif,serif" font-size="12" font-weight="normal" font-style="normal" fill="#777" text-anchor="middle" >A</text><rect x="2" y="13.500" width="12" height="1" fill="#55d"/></g></svg></div>
<div class="a tb" style="left:851.4px;top:336.2px;width:20.3px;background:#f4f4f4"><svg viewBox="0 0 16 16" style="left:1.2px"><rect x="2" y="5" width="11.500" height="9.500" rx="1" fill="#3b8fe8" stroke="#2a6ec0" stroke-width=".6"/><rect x="3.500" y="7.500" width="8.500" height="6" fill="#eef3f8"/><rect x="4.200" y="8.500" width="1.500" height="1.500" fill="#3c3"/><rect x="4.200" y="11" width="1.500" height="1.500" fill="#3c3"/><ellipse cx="11" cy="3.500" rx="4" ry="2.500" fill="#d9a143"/></svg></div>
<div class="a tb" style="left:319.2px;top:358.9px;width:20.3px;background:#dcdcdc"><svg viewBox="0 0 16 16" style="left:1.2px"><g fill="#555"><rect x="2" y="2" width="1" height="1"/><rect x="2" y="4" width="1" height="1"/><rect x="2" y="6" width="1" height="1"/><rect x="2" y="7" width="1" height="1"/><rect x="2" y="8" width="1" height="1"/><rect x="2" y="10" width="1" height="1"/><rect x="2" y="12" width="1" height="1"/><rect x="4" y="2" width="1" height="1"/><rect x="4" y="7" width="1" height="1"/><rect x="4" y="12" width="1" height="1"/><rect x="6" y="2" width="1" height="1"/><rect x="6" y="7" width="1" height="1"/><rect x="6" y="12" width="1" height="1"/><rect x="7" y="2" width="1" height="1"/><rect x="7" y="4" width="1" height="1"/><rect x="7" y="6" width="1" height="1"/><rect x="7" y="8" width="1" height="1"/><rect x="7" y="10" width="1" height="1"/><rect x="7" y="12" width="1" height="1"/><rect x="8" y="2" width="1" height="1"/><rect x="8" y="7" width="1" height="1"/><rect x="8" y="12" width="1" height="1"/><rect x="10" y="2" width="1" height="1"/><rect x="10" y="7" width="1" height="1"/><rect x="10" y="12" width="1" height="1"/><rect x="12" y="2" width="1" height="1"/><rect x="12" y="4" width="1" height="1"/><rect x="12" y="6" width="1" height="1"/><rect x="12" y="7" width="1" height="1"/><rect x="12" y="8" width="1" height="1"/><rect x="12" y="10" width="1" height="1"/><rect x="12" y="12" width="1" height="1"/></g></svg></div>
<div class="a tb" style="left:341.5px;top:358.9px;width:20.3px;background:#f4f4f4"><svg viewBox="0 0 16 16" style="left:1.2px"><text x="8" y="12.5" font-family="Liberation Serif,serif" font-size="12.5" font-weight="normal" font-style="normal" fill="#222" text-anchor="middle" >¶</text></svg></div>
<div class="a tb" style="left:364.4px;top:358.9px;width:20.3px;background:#f4f4f4"><svg viewBox="0 0 16 16" style="left:1.2px"><path d="M3 1.500h7l3 3v10h-10z" fill="#f4fbf4" stroke="#9a9" stroke-width=".8"/><path d="M5 6h3M5 8h4M5 10h3" stroke="#5a5" stroke-width="1"/><circle cx="10.500" cy="10.500" r="2.300" fill="#cde" stroke="#89a" stroke-width=".8"/><path d="M12 12.200l2 2" stroke="#89a" stroke-width="1.200"/></svg></div>
<div class="a tb" style="left:386.5px;top:358.9px;width:20.3px;background:#f4f4f4"><svg viewBox="0 0 16 16" style="left:1.2px"><rect x="2" y="2.500" width="12" height="11.500" rx="2" fill="#bcbcbc"/><rect x="4" y="4.500" width="8" height="6.500" rx="1" fill="#e4e4e4"/><path d="M5.500 6.500v2h5v-2" fill="none" stroke="#555" stroke-width="1.100"/></svg></div>
<div class="a tb" style="left:408.4px;top:358.9px;width:20.3px;background:#f4f4f4"><svg viewBox="0 0 16 16" style="left:1.2px"><g fill="#aaa" stroke="#888" stroke-width=".5"><rect x="7" y="3" width="2" height="11" rx="1"/><rect x="2" y="7.500" width="12" height="2.500" rx="1.200"/><circle cx="8" cy="3.500" r="1.800" fill="#ddd"/></g></svg></div>
<div class="a tb" style="left:431.5px;top:358.9px;width:20.3px;background:#f4f4f4"><svg viewBox="0 0 16 16" style="left:1.2px"><g opacity=".35"><rect x="1.500" y="6.500" width="5" height="3.500" rx="1.700" fill="none" stroke="#777" stroke-width="1.200"/><rect x="9.500" y="6.500" width="5" height="3.500" rx="1.700" fill="none" stroke="#777" stroke-width="1.200"/><path d="M8 2v3M8 11v3" stroke="#999" stroke-width=".8"/></g></svg></div>
<div class="a tb" style="left:453.4px;top:358.9px;width:20.3px;background:#f4f4f4"><svg viewBox="0 0 16 16" style="left:1.2px"><rect x="2" y="6.200" width="6" height="4" rx="2" fill="none" stroke="#808080" stroke-width="1.400"/><rect x="8" y="6.200" width="6" height="4" rx="2" fill="none" stroke="#808080" stroke-width="1.400"/><rect x="5" y="7.500" width="6" height="1.400" fill="#666"/></svg></div>
<div class="a tb" style="left:475.6px;top:358.9px;width:20.3px;background:#f4f4f4"><svg viewBox="0 0 16 16" style="left:1.2px"><rect x="1.500" y="3" width="13" height="10" fill="#fff" stroke="#999" stroke-width=".9"/><rect x="3" y="4.500" width="10" height="7" fill="#5aa9e6"/><path d="M3 11.500l4-5 3 3 1.500-1 1.500 1.500v1.500z" fill="#3a7a5a"/><path d="M3 4.500h10v2.500h-10z" fill="#9cd0f5" opacity=".7"/></svg></div>
<div class="a tb" style="left:498.1px;top:358.9px;width:20.3px;background:#f4f4f4"><svg viewBox="0 0 16 16" style="left:1.2px"><text x="8" y="5.8" font-family="Liberation Sans,serif" font-size="6.5" font-weight="normal" font-style="normal" fill="#222" text-anchor="middle" >abc</text><path d="M2.500 7h11" stroke="#444" stroke-width=".7" stroke-dasharray="1 1"/><path d="M4.500 11l3 3 6-6.500" fill="none" stroke="#2aad2a" stroke-width="2.400"/></svg></div>
<div class="a tb" style="left:520.5px;top:358.9px;width:20.3px;background:#f4f4f4"><svg viewBox="0 0 16 16" style="left:1.2px"><rect x="2" y="3" width="12" height="10.500" rx="1" fill="#f6f6f6" stroke="#999" stroke-width=".9"/><rect x="2" y="3" width="12" height="2" fill="#aaa"/><rect x="2.500" y="8" width="11" height="2" fill="#cfe4f8"/><rect x="2.500" y="10" width="11" height="3" fill="#e3f0fb"/></svg></div>
<div class="a tb" style="left:543.1px;top:358.9px;width:20.3px;background:#f4f4f4"><svg viewBox="0 0 16 16" style="left:1.2px"><rect x="2" y="3" width="12" height="10.500" rx="1" fill="#eee" stroke="#999" stroke-width=".9"/><rect x="2" y="3" width="12" height="2.200" fill="#999"/><rect x="9.500" y="6" width="3.500" height="6.500" fill="#8ab4e8"/><rect x="3.200" y="6.500" width="5.500" height="5.500" fill="#fafafa"/></svg></div>
</div>

<!-- EDITOR-XTD BUTTONS -->
<div class="a btn" style="left:313px;top:567px;width:146px"><i><svg viewBox="0 0 10 10" width="10" height="10"><path d="M5 0l3.600 3.800h-2.300v3h-2.600v-3h-2.300z" fill="#222"/><path d="M0 6.800v3h10v-3h-1.400v1.600h-7.200v-1.600z" fill="#222"/></svg></i><b style="left:27px">Everything in Everyway</b></div>
<div class="a btn" style="left:463px;top:567px;width:94px"><i><svg viewBox="0 0 10 10" width="10" height="10"><rect x=".6" y=".6" width="8.800" height="8.800" fill="#fff" stroke="#2a6fd6" stroke-width="1.200"/><rect x="2.800" y="2.800" width="4.400" height="4.400" fill="#2a6fd6"/></svg></i><b style="left:26px">Engage Box</b></div>
<div class="a btn" style="left:561px;top:567px;width:129px"><i><svg viewBox="0 0 10 10" width="10" height="10"><path d="M.6 .8h3.600l1 1.200h4.200v7.400h-8.800z" fill="none" stroke="#222" stroke-width="1.200"/><path d="M5 3.200l2.300 2.500h-1.500v2.200h-1.600v-2.200h-1.500z" fill="#222"/></svg></i><b style="left:27px">Event Gallery Event</b></div>
<div class="a btn" style="left:694px;top:567px;width:132px"><i><svg viewBox="0 0 10 10" width="10" height="10"><rect x=".5" y="1.500" width="9" height="7" fill="#222"/><path d="M1.500 7.500l2-3 1.500 2 1.500-1 2 2z" fill="#eee"/><circle cx="7.200" cy="3.500" r=".9" fill="#eee"/></svg></i><b style="left:27px">Event Gallery Image</b></div>
<div class="a btn" style="left:830px;top:567px;width:66px"><i><svg viewBox="0 0 10 10" width="10" height="10"><path d="M.8 0h5l3 3v3h-1.200v-2.300h-2.500v-2.500h-3.100v7.600h3.500v1.200h-4.700z" fill="#333"/><path d="M7.800 5.600l.8 1.400 1.400.8-1.400.8-.8 1.400-.8-1.400-1.400-.8 1.400-.8z" fill="#222"/></svg></i><b style="left:27px">Modul</b></div>
<div class="a btn" style="left:900px;top:567px;width:76px"><i><svg viewBox="0 0 10 10" width="10" height="10"><path d="M.5 2.500h4v1.200h-2.800v4.600h5.600v-1.300h1.200v2.500h-8z" fill="#222"/><path d="M6.500 .8l3.300 2.700-3.300 2.700v-1.700c-1.800 0-2.800.5-3.500 1.500.2-2 1.300-3.300 3.500-3.500z" fill="#222"/></svg></i><b style="left:27px">Nabídka</b></div>
<div class="a btn" style="left:980px;top:567px;width:73px"><i style="left:10px"><svg viewBox="0 0 10 10" width="10" height="10"><rect x="1" y="0" width="8" height="10" rx=".8" fill="#222"/><circle cx="5" cy="3.500" r="1.400" fill="#eee"/><path d="M2.500 7.800c0-2.600 5-2.600 5 0z" fill="#eee"/></svg></i><b style="left:27px">Kontakt</b></div>
<div class="a btn" style="left:317px;top:589px;width:73px"><i><svg viewBox="0 0 10 10" width="10" height="10"><rect x=".6" y="1.600" width="8.800" height="8" fill="none" stroke="#333" stroke-width="1"/><path d="M2.500 0h5v2h-5z" fill="#333"/><path d="M2.200 4h5.600M2.200 5.800h5.600M2.200 7.600h5.600" stroke="#333" stroke-width=".9"/></svg></i><b style="left:27px">Záložky</b></div>
<div class="a btn" style="left:394px;top:589px;width:70px"><i><svg viewBox="0 0 10 10" width="10" height="10"><path d="M.8 0h5l3 3v3h-1.200v-2.300h-2.500v-2.500h-3.100v7.600h3.500v1.200h-4.700z" fill="#333"/><path d="M7.800 5.600l.8 1.400 1.400.8-1.400.8-.8 1.400-.8-1.400-1.400-.8 1.400-.8z" fill="#222"/></svg></i><b style="left:27px">Článek</b></div>

<!-- BOTTOM FORM -->
<div class="a lb" style="left:184px;top:626px">Výchozí</div>
<div class="a inp" style="left:313px;top:619px;width:59px;height:23px"></div>
<div class="a lb" style="left:184px;top:659px">Požadováno</div>
<div class="a rb" style="top:649px"><i class="rd c" style="left:20px"></i><span class="rt" style="left:38px">Ne</span><i class="rd" style="left:74px"></i><span class="rt" style="left:92px">Ano</span></div>
<div class="a lb" style="left:184px;top:691px">Zobrazit ve formuláři košíku</div>
<div class="a rb" style="top:681px"><i class="rd c" style="left:20px"></i><span class="rt" style="left:38px">Ne</span><i class="rd" style="left:74px"></i><span class="rt" style="left:92px">Ano</span></div>
<div class="a lb" style="left:184px;top:723px">Zobrazit ve správě účtu</div>
<div class="a rb" style="top:713px"><i class="rd" style="left:20px"></i><span class="rt" style="left:38px">Ne</span><i class="rd c" style="left:74px"></i><span class="rt" style="left:92px">Ano</span></div>
<div class="a lb" style="left:184px;top:755px">Zobrazit v dopravě</div>
<div class="a rb" style="top:745px"><i class="rd c" style="left:20px"></i><span class="rt" style="left:38px">Ne</span><i class="rd" style="left:74px"></i><span class="rt" style="left:92px">Ano</span></div>
<div class="a lb" style="left:184px;top:787px">Pouze ke čtení</div>
<div class="a rb" style="top:777px"><i class="rd c" style="left:20px"></i><span class="rt" style="left:38px">Ne</span><i class="rd" style="left:74px"></i><span class="rt" style="left:92px">Ano</span></div>
<div class="a lb" style="left:184px;top:819px">Stav</div>
<div class="a rb" style="top:809px"><i class="rd" style="left:20px"></i><span class="rt" style="left:38px">Ne</span><i class="rd c" style="left:74px"></i><span class="rt" style="left:92px">Ano</span></div>

<div class="a lb" style="left:184px;top:852px">Velikost pole</div>
<div class="a inp" style="left:313px;top:845px;width:59px;height:23px;line-height:21px">0</div>
<div class="a lb" style="left:184px;top:881px">Řazení</div>
<div class="a inp" style="left:313px;top:875px;width:156px;height:22px;line-height:20px;color:#333;box-shadow:none;border-color:#c8c8c8;border-radius:2px;padding-left:7px">53 ico</div>
<div class="a" style="left:452px;top:876px;width:16px;height:20px;background:#f0f0f0;border-left:1px solid #ccc"></div>
<div class="a" style="left:457px;top:884px;width:0;height:0;border-left:3.500px solid transparent;border-right:3.500px solid transparent;border-top:3.500px solid #333"></div>

<!-- STATUS BAR -->
<div class="a" id="status" style="left:0;top:909px;width:1106px;height:20px;background:#ececec;border-top:1px solid #dedede"></div>
<svg class="a" style="left:9px;top:915px" width="9" height="9" viewBox="0 0 10 10"><path d="M.6 2.200h4.400v1.400h-3v4.800h4.800v-2.400h1.400v3.800h-7.600z" fill="#444"/><path d="M5.400 .4h4.200v4.200l-1.400-1.400-2.600 2.600-1.400-1.400 2.600-2.600z" fill="#444"/></svg>
<div class="a st" style="left:21px">Náhled webu</div>
<div class="a bdg" style="left:94px;width:24px">17</div>
<div class="a st" style="left:121px">Návštěvníci</div>
<div class="a" style="left:178px;top:915px;width:1px;height:12px;background:#888"></div>
<div class="a bdg" style="left:187px;width:29px">208</div>
<div class="a st" style="left:219px">Správců</div>
<div class="a bdg" style="left:270px;width:20px">0</div>
<div class="a st" style="left:292px">Zprávy</div>
<div class="a" style="left:329px;top:915px;width:1px;height:12px;background:#888"></div>
<div class="a" style="left:338px;top:918px;width:10px;height:3px;background:#444"></div>
<div class="a st" style="left:352px">Odhlásit se</div>
<div class="a" style="left:408px;top:915px;width:1px;height:12px;background:#888"></div>
<svg class="a" style="left:417px;top:912px" width="13" height="13" viewBox="0 0 13 13"><path d="M2 1.500l9 9M11.500 1l-7.500 8" stroke="#444" stroke-width="1.300" stroke-linecap="round"/><path d="M1 11.500l3.500-3.500 2 1.500z" fill="#444"/></svg>
<div class="a st" style="left:433px;font-size:9.500px;letter-spacing:.1px">Promazat mezipaměť</div>
<div class="a st" style="left:942px">Joomla! 3.9.0 &nbsp;— &nbsp;© 2018 K+K Sport</div>

<!-- PAGE SCROLLBAR -->
<div class="a" style="left:1106px;top:0;width:17px;height:928px;background:#f1f1f1"></div>
<div class="a" style="left:1108px;top:112px;width:13px;height:668px;background:#c1c1c1"></div>
<div class="a" style="left:1110px;top:7px;width:0;height:0;border-left:4px solid transparent;border-right:4px solid transparent;border-bottom:4px solid #505050"></div>
<div class="a" style="left:1110px;top:920px;width:0;height:0;border-left:4px solid transparent;border-right:4px solid transparent;border-top:4px solid #505050"></div>
<div class="a" style="left:0;top:928px;width:1123px;height:3px;background:#0c0c10;border-top:1px solid #8c8c90"></div>

</body>
</html>
